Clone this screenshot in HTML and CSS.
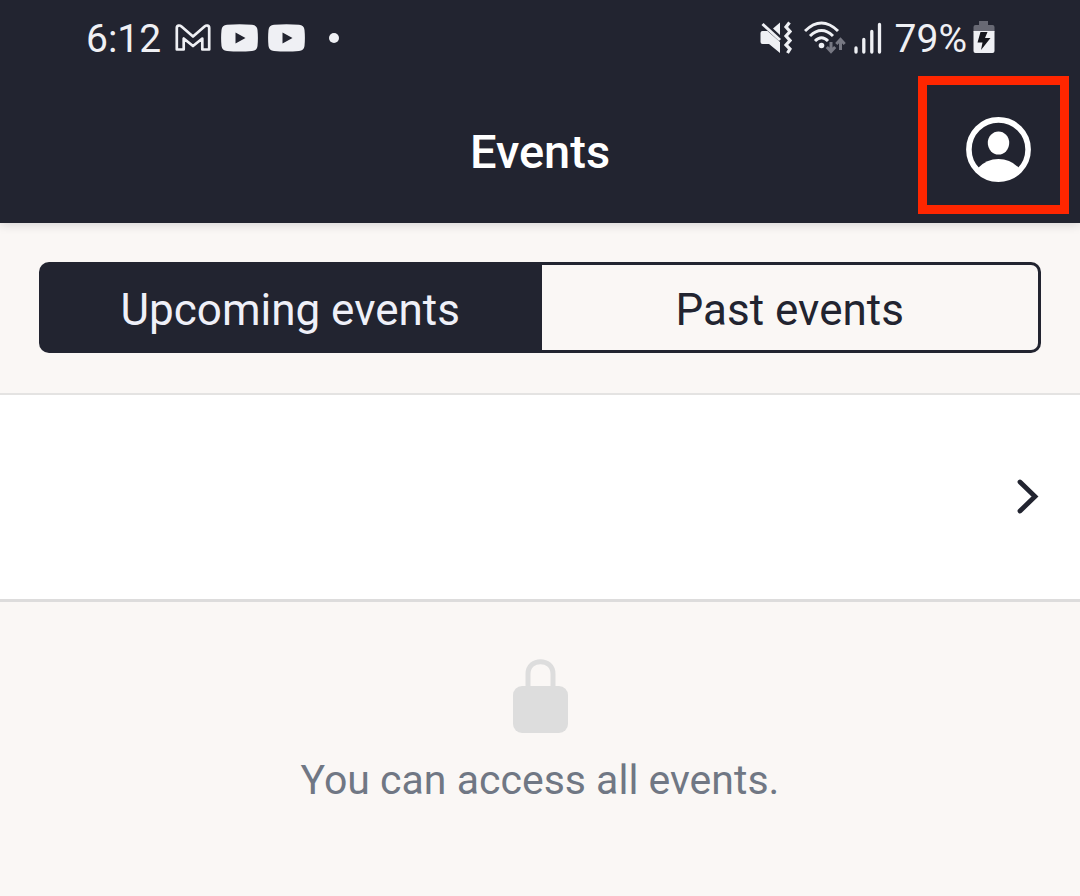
FILE: index.html
```html
<!DOCTYPE html>
<html lang="en">
<head>
<meta charset="utf-8">
<meta name="viewport" content="width=device-width, initial-scale=1">
<title>Events</title>
<link rel="stylesheet" href="styles.css">
</head>
<body>
<header class="top">
  <div class="status">
    <div class="status-group">
      <span class="clock">6:12</span>
      <svg class="icon" width="36" height="28" viewBox="0 0 36 28" aria-hidden="true">
        <path d="M1.800 25.500V4C1.800 1.300 4.500.8 6.500 2.500L18 12.500 29.500 2.500C31.500.8 34.200 1.300 34.200 4V25.500H27.300V14.500L18 22 8.700 14.500V25.500Z" fill="none" stroke="#eff0f4" stroke-width="2.700" stroke-linejoin="round"/>
      </svg>
      <svg class="icon" width="37" height="28" viewBox="0 0 37 28" aria-hidden="true">
        <path fill-rule="evenodd" d="M6 .8Q18.500-.3 31 .8Q36 1 36.500 6Q37.300 14 36.500 22Q36 26.500 31 27Q18.500 28 6 27Q1 26.500.5 22Q-.3 14 .5 6Q1 1 6 .8ZM14.500 8.500V19.500L24.500 14Z" fill="#eff0f4"/>
      </svg>
      <svg class="icon" width="37" height="28" viewBox="0 0 37 28" aria-hidden="true">
        <path fill-rule="evenodd" d="M6 .8Q18.500-.3 31 .8Q36 1 36.500 6Q37.300 14 36.500 22Q36 26.500 31 27Q18.500 28 6 27Q1 26.500.5 22Q-.3 14 .5 6Q1 1 6 .8ZM14.500 8.500V19.500L24.500 14Z" fill="#eff0f4"/>
      </svg>
      <span class="dot"></span>
    </div>
    <div class="status-group status-right">
      <svg class="icon" width="32" height="34" viewBox="0 0 32 34" aria-hidden="true">
        <path d="M2.500 10H7.500L20 21V32L9 23H2.500Q.5 23 .5 21V12Q.5 10 2.500 10ZM20 1.500V14L13 7.500Z" fill="#eff0f4"/>
        <path d="M2.500 3L20 19" stroke="#eff0f4" stroke-width="3"/>
        <path d="M29.500 1.500L26 6 30 10.500 26 15 30 19.500 26 24 30 28 27.500 32" fill="none" stroke="#eff0f4" stroke-width="3.200"/>
      </svg>
      <svg class="icon wifi" width="42" height="34" viewBox="0 0 42 34" aria-hidden="true">
        <g fill="none" stroke="#eff0f4" stroke-width="3">
          <path d="M1 10Q17.500-6 34 10"/>
          <path d="M6 15Q17.500 4 29 15"/>
          <path d="M11 20Q17.500 13.500 24 20"/>
        </g>
        <circle cx="17.500" cy="24.500" r="2.800" fill="#eff0f4"/>
        <path d="M27 21V30M22.800 26L27 30.500 31.200 26M36.500 29V19.500M32.300 23L36.500 18.500 40.700 23" fill="none" stroke="#777883" stroke-width="3"/>
      </svg>
      <svg class="icon" width="29" height="34" viewBox="0 0 29 34" aria-hidden="true">
        <path d="M2 27V31M9.800 18.500V31M17.800 10.500V31M25.500 3.500V31" stroke="#eff0f4" stroke-width="3.300" stroke-linecap="round"/>
      </svg>
      <span class="charge">79%</span>
      <svg class="icon" width="22" height="34" viewBox="0 0 22 34" aria-hidden="true">
        <path d="M6 0H15V4H19.500Q21.500 4 21.500 6V11H.5V6Q.5 4 2.500 4H6Z" fill="#686974"/>
        <path d="M.5 10H21.500V30Q21.500 32 19.500 32H2.500Q.5 32 .5 30Z" fill="#eff0f4"/>
        <path d="M7.500 11H14.500L12 17H17.500L8 29 9.500 21.500H4.500Z" fill="#14151c"/>
      </svg>
    </div>
  </div>
  <div class="titlebar">
    <h1 class="title">Events</h1>
    <button class="profile" type="button" aria-label="Profile">
      <svg class="icon" width="66" height="66" viewBox="0 0 66 66" aria-hidden="true">
        <circle cx="33.500" cy="33.500" r="29.600" fill="none" stroke="#fff" stroke-width="5.600"/>
        <ellipse cx="33.500" cy="27" rx="10.700" ry="11.500" fill="#fff"/>
        <path d="M13 52Q21.500 43 33.500 43T54 52Q46.500 62.500 33.500 62.500T13 52Z" fill="#fff"/>
      </svg>
    </button>
  </div>
</header>
<main>
  <div class="filter">
    <div class="segments">
      <button class="segment segment-on" type="button" aria-pressed="true">Upcoming events</button>
      <button class="segment segment-off" type="button" aria-pressed="false">Past events</button>
    </div>
  </div>
  <button class="row" type="button" aria-label="Open event">
    <svg class="icon" width="22" height="36" viewBox="0 0 22 36" aria-hidden="true">
      <path d="M3 3L18 17.500 3 32" fill="none" stroke="#222430" stroke-width="4.800" stroke-linecap="round"/>
    </svg>
  </button>
  <section class="access">
    <svg class="icon" width="56" height="76" viewBox="0 0 56 76" aria-hidden="true">
      <path d="M16 31V16C16-.5 41-.5 41 16V31" fill="none" stroke="#ddd" stroke-width="5"/>
      <rect x="1" y="28" width="55" height="47" rx="9" fill="#ddd"/>
    </svg>
    <p class="access-text">You can access all events.</p>
  </section>
</main>
</body>
</html>
```
FILE: styles.css
```css
* {
  box-sizing: border-box;
}

body {
  margin: 0;
  min-height: 100vh;
  background: #faf7f5;
  color: #222430;
  font-family: Roboto, "Liberation Sans", sans-serif;
}

button {
  margin: 0;
  font: inherit;
  color: inherit;
  cursor: pointer;
}

.icon {
  display: block;
  flex: none;
}

.top {
  position: relative;
  background: #222430;
  color: #fff;
  box-shadow: 0 1px 10px rgba(34, 36, 48, 0.18);
}

.status {
  display: flex;
  justify-content: space-between;
  align-items: center;
  height: 76px;
  padding: 0 85px 0 86px;
  color: #eff0f4;
  font-size: 39px;
  line-height: 48px;
}

.status-group {
  display: flex;
  align-items: center;
  gap: 10px;
}

.clock {
  padding-top: 2px;
  margin-right: 4px;
}

.dot {
  width: 10px;
  height: 10px;
  margin-left: 14px;
  border-radius: 50%;
  background: #eff0f4;
}

.status-right {
  gap: 8px;
}

.wifi {
  margin-left: 4px;
}

.charge {
  padding-top: 2px;
  margin: 0 -2px 0 4px;
}

.titlebar {
  display: grid;
  grid-template-columns: 1fr auto 1fr;
  align-items: start;
  min-height: 147px;
  padding: 0 11px;
}

.title {
  grid-column: 2;
  margin: 0;
  padding-top: 48px;
  font-size: 47px;
  font-weight: 500;
  line-height: 56px;
}

.profile {
  justify-self: end;
  padding: 31px 29px 23px 38px;
  border: 9px solid #ff2600;
  background: transparent;
}

.filter {
  padding: 39px 39px 40px;
  border-bottom: 2px solid #e4e3e2;
}

.segments {
  display: grid;
  grid-template-columns: 1fr 1fr;
  gap: 3px;
  padding: 3px;
  border-radius: 10px;
  background: #222430;
}

.segment {
  padding: 17px 0 12px;
  border: 0;
  font-size: 44px;
  line-height: 56px;
}

.segment-on {
  background: #222430;
  color: #eff0f8;
}

.segment-off {
  border-radius: 0 7px 7px 0;
  background: #faf7f5;
}

.row {
  display: flex;
  justify-content: flex-end;
  align-items: center;
  width: 100%;
  min-height: 207px;
  padding: 0 41px 0 24px;
  border: 0;
  border-bottom: 3px solid #dddcdc;
  background: #fff;
}

.access {
  display: flex;
  flex-direction: column;
  align-items: center;
  gap: 22px;
  padding: 56px 24px;
}

.access-text {
  margin: 0;
  color: #707784;
  font-size: 41px;
  line-height: 48px;
  text-align: center;
}
```
